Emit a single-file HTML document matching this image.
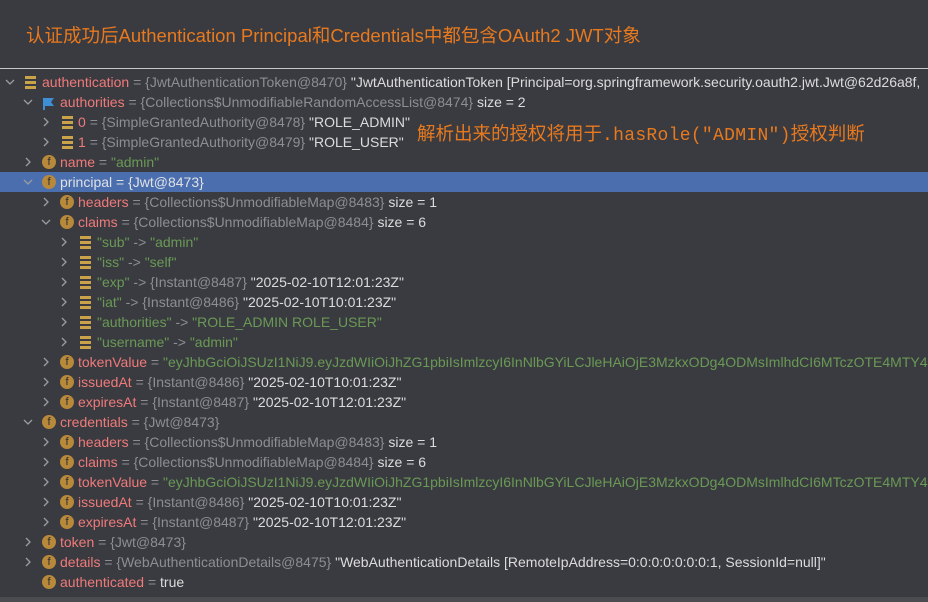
<!DOCTYPE html>
<html><head><meta charset="utf-8"><style>
body{margin:0;width:928px;height:602px;overflow:hidden;background:#393b40;font-family:"Liberation Sans","Noto Sans CJK SC",sans-serif;font-size:14px;position:relative}
.title{position:absolute;left:26px;top:22px;color:#e8791e;font-size:18.5px;white-space:nowrap}
.line{position:absolute;left:0;top:68px;width:928px;height:1px;background:#c8c8c8}
.r{position:absolute;left:0;width:928px;height:20px;line-height:20px;white-space:nowrap;overflow:hidden;color:#bcbec4}
.sel{background:#4b6eaf}
.a{position:absolute;top:5px;width:10px;height:10px}
.ic{position:absolute;top:3px;width:14px;height:14px}
.f{border-radius:50%;background:#b8893a;color:#2b2d30;font-size:11px;line-height:14px;text-align:center;font-family:"Liberation Sans",sans-serif}
.l{background:linear-gradient(#c9a24a 0 3px,transparent 3px 5px,#c9a24a 5px 8px,transparent 8px 10px,#c9a24a 10px 13px);width:11px;height:13px;top:4px}
.t{position:absolute;top:0}
.n{color:#f07a7a}.g{color:#8c8e92}.s{color:#6a9955}.w{color:#dcdcdc}
.note{position:absolute;left:417px;top:120px;color:#e8791e;font-size:18.5px;white-space:nowrap}
.note code{font-family:"Liberation Mono",monospace;font-size:18px;letter-spacing:0.3px}
</style></head><body>
<svg width="0" height="0" style="position:absolute"><defs>
<symbol id="d" viewBox="0 0 10 10"><path d="M1 3L5 7L9 3" fill="none" stroke="#9a9ca0" stroke-width="1.3"/></symbol>
<symbol id="c" viewBox="0 0 10 10"><path d="M3 1L7 5L3 9" fill="none" stroke="#9a9ca0" stroke-width="1.3"/></symbol>
</defs></svg>
<div class="title">认证成功后Authentication Principal和Credentials中都包含OAuth2 JWT对象</div>
<div class="line"></div>
<div class="r" style="top:72px"><svg class="a" style="left:5px"><use href="#d"/></svg><span class="ic l" style="left:25px"></span><span class="t" style="left:42px"><span class="n">authentication</span> <span class="g">= {JwtAuthenticationToken@8470}</span> <span class="w">"JwtAuthenticationToken [Principal=org.springframework.security.oauth2.jwt.Jwt@62d26a8f, </span></span></div>
<div class="r" style="top:92px"><svg class="a" style="left:23px"><use href="#d"/></svg><span class="ic" style="left:43px;width:12px;height:12px"><svg width="12" height="13"><path d="M1 1V13" stroke="#3d8fd6" stroke-width="2"/><path d="M2 1H11L8 5L11 9H2Z" fill="#3d8fd6"/></svg></span><span class="t" style="left:60px"><span class="n">authorities</span> <span class="g">= {Collections$UnmodifiableRandomAccessList@8474}</span> <span class="w">size = 2</span></span></div>
<div class="r" style="top:112px"><svg class="a" style="left:41px"><use href="#c"/></svg><span class="ic l" style="left:62px"></span><span class="t" style="left:78px"><span class="n">0</span> <span class="g">= {SimpleGrantedAuthority@8478}</span> <span class="w">"ROLE_ADMIN"</span></span></div>
<div class="r" style="top:132px"><svg class="a" style="left:41px"><use href="#c"/></svg><span class="ic l" style="left:62px"></span><span class="t" style="left:78px"><span class="n">1</span> <span class="g">= {SimpleGrantedAuthority@8479}</span> <span class="w">"ROLE_USER"</span></span></div>
<div class="r" style="top:152px"><svg class="a" style="left:23px"><use href="#c"/></svg><span class="ic f" style="left:42px">f</span><span class="t" style="left:60px"><span class="n">name</span> <span class="g">=</span> <span class="s">"admin"</span></span></div>
<div class="r sel" style="top:172px"><svg class="a" style="left:23px"><use href="#d"/></svg><span class="ic f" style="left:42px">f</span><span class="t" style="left:60px;color:#dfe1e5">principal = {Jwt@8473}</span></div>
<div class="r" style="top:192px"><svg class="a" style="left:41px"><use href="#c"/></svg><span class="ic f" style="left:60px">f</span><span class="t" style="left:78px"><span class="n">headers</span> <span class="g">= {Collections$UnmodifiableMap@8483}</span> <span class="w">size = 1</span></span></div>
<div class="r" style="top:212px"><svg class="a" style="left:41px"><use href="#d"/></svg><span class="ic f" style="left:60px">f</span><span class="t" style="left:78px"><span class="n">claims</span> <span class="g">= {Collections$UnmodifiableMap@8484}</span> <span class="w">size = 6</span></span></div>
<div class="r" style="top:232px"><svg class="a" style="left:59px"><use href="#c"/></svg><span class="ic l" style="left:80px"></span><span class="t" style="left:97px"><span class="s">"sub"</span> <span class="g">-&gt;</span> <span class="s">"admin"</span></span></div>
<div class="r" style="top:252px"><svg class="a" style="left:59px"><use href="#c"/></svg><span class="ic l" style="left:80px"></span><span class="t" style="left:97px"><span class="s">"iss"</span> <span class="g">-&gt;</span> <span class="s">"self"</span></span></div>
<div class="r" style="top:272px"><svg class="a" style="left:59px"><use href="#c"/></svg><span class="ic l" style="left:80px"></span><span class="t" style="left:97px"><span class="s">"exp"</span> <span class="g">-&gt; {Instant@8487}</span> <span class="w">"2025-02-10T12:01:23Z"</span></span></div>
<div class="r" style="top:292px"><svg class="a" style="left:59px"><use href="#c"/></svg><span class="ic l" style="left:80px"></span><span class="t" style="left:97px"><span class="s">"iat"</span> <span class="g">-&gt; {Instant@8486}</span> <span class="w">"2025-02-10T10:01:23Z"</span></span></div>
<div class="r" style="top:312px"><svg class="a" style="left:59px"><use href="#c"/></svg><span class="ic l" style="left:80px"></span><span class="t" style="left:97px"><span class="s">"authorities"</span> <span class="g">-&gt;</span> <span class="s">"ROLE_ADMIN ROLE_USER"</span></span></div>
<div class="r" style="top:332px"><svg class="a" style="left:59px"><use href="#c"/></svg><span class="ic l" style="left:80px"></span><span class="t" style="left:97px"><span class="s">"username"</span> <span class="g">-&gt;</span> <span class="s">"admin"</span></span></div>
<div class="r" style="top:352px"><svg class="a" style="left:41px"><use href="#c"/></svg><span class="ic f" style="left:60px">f</span><span class="t" style="left:78px"><span class="n">tokenValue</span> <span class="g">=</span> <span class="s">"eyJhbGciOiJSUzI1NiJ9.eyJzdWIiOiJhZG1pbiIsImlzcyI6InNlbGYiLCJleHAiOjE3MzkxODg4ODMsImlhdCI6MTczOTE4MTY4MywiYXV0aG9yaXRpZXMiOiJ</span></span></div>
<div class="r" style="top:372px"><svg class="a" style="left:41px"><use href="#c"/></svg><span class="ic f" style="left:60px">f</span><span class="t" style="left:78px"><span class="n">issuedAt</span> <span class="g">= {Instant@8486}</span> <span class="w">"2025-02-10T10:01:23Z"</span></span></div>
<div class="r" style="top:392px"><svg class="a" style="left:41px"><use href="#c"/></svg><span class="ic f" style="left:60px">f</span><span class="t" style="left:78px"><span class="n">expiresAt</span> <span class="g">= {Instant@8487}</span> <span class="w">"2025-02-10T12:01:23Z"</span></span></div>
<div class="r" style="top:412px"><svg class="a" style="left:23px"><use href="#d"/></svg><span class="ic f" style="left:42px">f</span><span class="t" style="left:60px"><span class="n">credentials</span> <span class="g">= {Jwt@8473}</span></span></div>
<div class="r" style="top:432px"><svg class="a" style="left:41px"><use href="#c"/></svg><span class="ic f" style="left:60px">f</span><span class="t" style="left:78px"><span class="n">headers</span> <span class="g">= {Collections$UnmodifiableMap@8483}</span> <span class="w">size = 1</span></span></div>
<div class="r" style="top:452px"><svg class="a" style="left:41px"><use href="#c"/></svg><span class="ic f" style="left:60px">f</span><span class="t" style="left:78px"><span class="n">claims</span> <span class="g">= {Collections$UnmodifiableMap@8484}</span> <span class="w">size = 6</span></span></div>
<div class="r" style="top:472px"><svg class="a" style="left:41px"><use href="#c"/></svg><span class="ic f" style="left:60px">f</span><span class="t" style="left:78px"><span class="n">tokenValue</span> <span class="g">=</span> <span class="s">"eyJhbGciOiJSUzI1NiJ9.eyJzdWIiOiJhZG1pbiIsImlzcyI6InNlbGYiLCJleHAiOjE3MzkxODg4ODMsImlhdCI6MTczOTE4MTY4MywiYXV0aG9yaXRpZXMiOiJ</span></span></div>
<div class="r" style="top:492px"><svg class="a" style="left:41px"><use href="#c"/></svg><span class="ic f" style="left:60px">f</span><span class="t" style="left:78px"><span class="n">issuedAt</span> <span class="g">= {Instant@8486}</span> <span class="w">"2025-02-10T10:01:23Z"</span></span></div>
<div class="r" style="top:512px"><svg class="a" style="left:41px"><use href="#c"/></svg><span class="ic f" style="left:60px">f</span><span class="t" style="left:78px"><span class="n">expiresAt</span> <span class="g">= {Instant@8487}</span> <span class="w">"2025-02-10T12:01:23Z"</span></span></div>
<div class="r" style="top:532px"><svg class="a" style="left:23px"><use href="#c"/></svg><span class="ic f" style="left:42px">f</span><span class="t" style="left:60px"><span class="n">token</span> <span class="g">= {Jwt@8473}</span></span></div>
<div class="r" style="top:552px"><svg class="a" style="left:23px"><use href="#c"/></svg><span class="ic f" style="left:42px">f</span><span class="t" style="left:60px"><span class="n">details</span> <span class="g">= {WebAuthenticationDetails@8475}</span> <span class="w">"WebAuthenticationDetails [RemoteIpAddress=0:0:0:0:0:0:0:1, SessionId=null]"</span></span></div>
<div class="r" style="top:572px"><span class="ic f" style="left:42px">f</span><span class="t" style="left:60px"><span class="n">authenticated</span> <span class="g">=</span> <span class="w">true</span></span></div>
<div class="note">解析出来的授权将用于<code>.hasRole("ADMIN")</code>授权判断</div>
<div style="position:absolute;left:0;top:597px;width:928px;height:5px;background:#4a4c50"></div>
</body></html>
